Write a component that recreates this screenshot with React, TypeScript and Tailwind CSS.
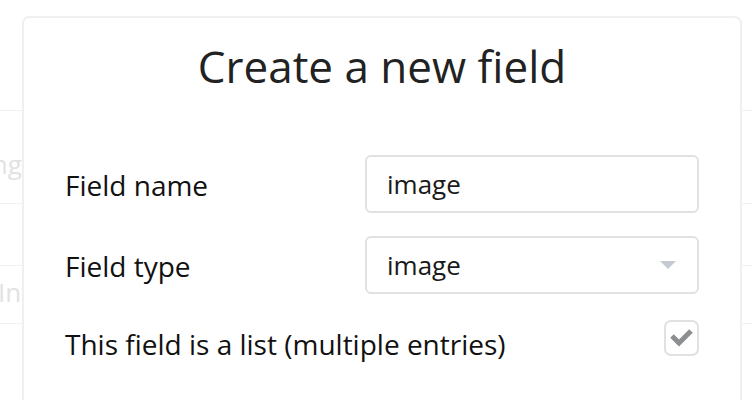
const font = { fontFamily: '"Open Sans", "Noto Sans", sans-serif' };

function TextInput({ value, select }: { value: string; select?: boolean }) {
  return (
    <div className="flex h-[58px] w-[334px] items-center justify-between rounded-[6px] border-2 border-[#e1e1e1] bg-white pl-[20px] pr-[20px]">
      <span className="text-[26px] text-[#1a1a1a]">{value}</span>
      {select && (
        <svg width="16" height="8" viewBox="0 0 16 8" className="mr-[1px]">
          <path d="M0 0 L16 0 L8 8 Z" fill="#c6cad1" />
        </svg>
      )}
    </div>
  );
}

function Checkbox() {
  return (
    <div className="flex h-[36px] w-[35px] items-center justify-center rounded-[7px] border-2 border-[#e1e1e1] bg-white">
      <svg width="26" height="20" viewBox="0 0 26 20">
        <path d="M3 8 L10 15 L22 3" fill="none" stroke="#8c8f91" strokeWidth="5" />
      </svg>
    </div>
  );
}

export default function App() {
  return (
    <div className="relative h-[400px] w-[752px] overflow-hidden bg-white" style={font}>
      {/* page behind the dialog */}
      <div className="flex flex-col">
        <div className="h-[111px] border-b border-[#f1f1f1]" />
        <div className="flex h-[93px] items-center border-b border-[#f1f1f1]">
          <span className="ml-[-49px] mt-[14px] whitespace-nowrap text-[26px] text-[#e2e2e2]">Strings</span>
        </div>
        <div className="h-[62px] border-b border-[#f1f1f1]" />
        <div className="flex h-[58px] items-center border-b border-[#f1f1f1]">
          <span className="ml-[-2px] mt-[-4px] whitespace-nowrap text-[26px] text-[#e2e2e2]">Int</span>
        </div>
      </div>

      {/* dialog */}
      <div className="absolute left-[22px] top-[16px] h-[420px] w-[720px] rounded-[7px] border-2 border-[#f0f0f0] bg-white px-[41px]">
        <h1 className="pt-[26px] text-center text-[44px] leading-none text-[#222222]">Create a new field</h1>

        <div className="mt-[67px] flex flex-col gap-[23px]">
          <div className="flex items-center justify-between">
            <span className="mt-[2px] text-[28px] text-[#111111]">Field name</span>
            <TextInput value="image" />
          </div>
          <div className="flex items-center justify-between">
            <span className="mt-[2px] text-[28px] text-[#111111]">Field type</span>
            <TextInput value="image" select />
          </div>
          <div className="flex items-center justify-between">
            <span className="mt-[6px] text-[28px] text-[#111111]">This field is a list (multiple entries)</span>
            <div className="-mt-[6px]">
              <Checkbox />
            </div>
          </div>
        </div>
      </div>
    </div>
  );
}
